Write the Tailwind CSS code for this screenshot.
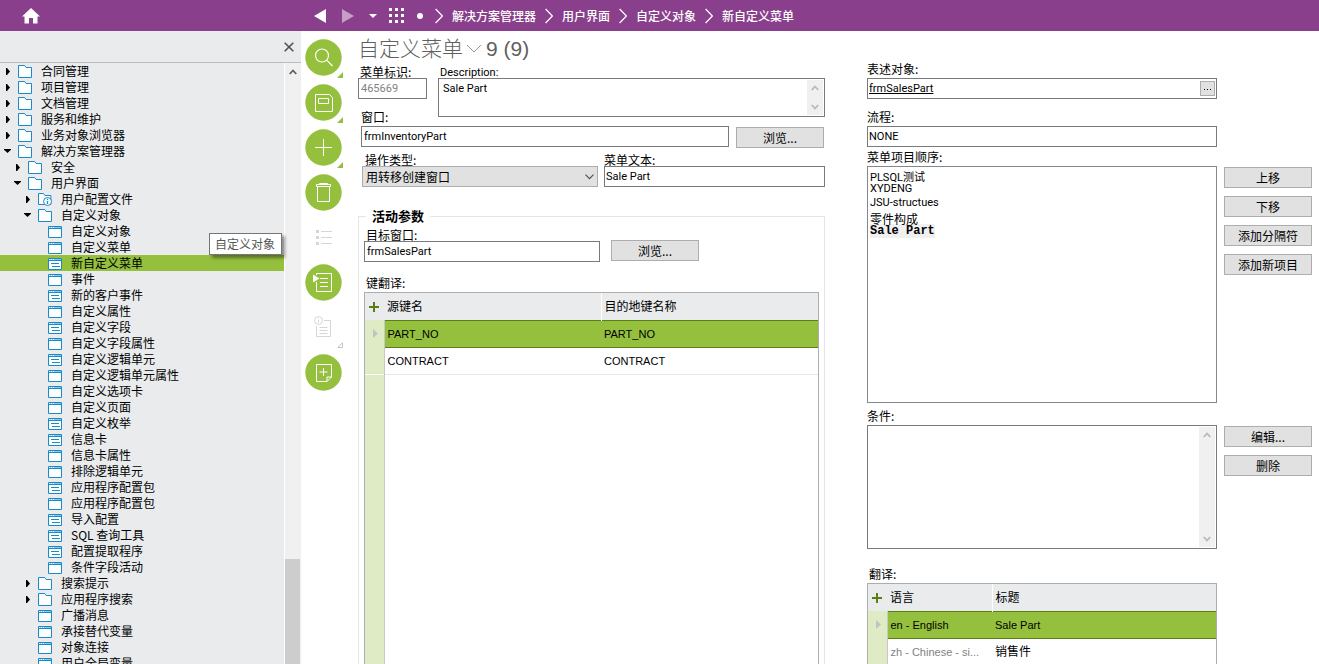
<!DOCTYPE html>
<html lang="zh-CN">
<head>
<meta charset="utf-8">
<title>自定义菜单</title>
<script src="https://cdn.jsdelivr.net/npm/@tailwindcss/browser@4"></script>
</head>
<body class="h-screen overflow-hidden flex flex-col bg-white text-black text-xs font-['Noto_Sans_CJK_SC',sans-serif]">
<svg class="hidden">
  <symbol id="folder" viewBox="0 0 14 13"><path d="M.5 12.5V.5h6.2l1.4 2h5.4v10z" fill="#fff" stroke="#1a8bc9"/></symbol>
  <symbol id="folderinfo" viewBox="0 0 14 13"><path d="M.5 11.5V.5h5l1.400 2h6v9z" fill="#fff" stroke="#1a8bc9"/><circle cx="9.500" cy="8.500" r="4" fill="#fff" stroke="#1a8bc9"/><path d="M9.500 5.800v1.200M9.500 8v3" stroke="#1a8bc9" stroke-width="1.200"/></symbol>
  <symbol id="win" viewBox="0 0 14 13"><path d="M.5 1.500h13v11H.5z" fill="#fff" stroke="#1a8bc9"/><path d="M2 2.500h1M4 2.500h1M6 2.500h7" stroke="#8cc4e4"/><path d="M1 3.500h12" stroke="#1a8bc9"/></symbol>
  <symbol id="form" viewBox="0 0 14 13"><path d="M.5 1.500h13v11H.5z" fill="#fff" stroke="#1a8bc9"/><path d="M2 2.500h1M4 2.500h1M6 2.500h7" stroke="#8cc4e4"/><path d="M1 3.500h12M3 6.500h8M4 9.500h8" stroke="#1a8bc9"/></symbol>
  <symbol id="closed" viewBox="0 0 4 7"><path d="M0 0h1l3 3.500L1 7H0z"/></symbol>
  <symbol id="open" viewBox="0 0 7 4"><path d="M0 0h7v.8L3.500 4 0 .8z"/></symbol>
  <symbol id="crumb" viewBox="0 0 8 16"><path d="M.6 1l6.800 7-6.800 7" fill="none" stroke="#fff" stroke-width="1.200"/></symbol>
  <symbol id="up" viewBox="0 0 8 6"><path d="M.7 5L4 1.500 7.300 5" fill="none" stroke="currentColor" stroke-width="1.800"/></symbol>
  <symbol id="down" viewBox="0 0 8 6"><path d="M.7 1L4 4.500 7.300 1" fill="none" stroke="currentColor" stroke-width="1.800"/></symbol>
  <symbol id="corner" viewBox="0 0 6 6"><path d="M6 0v6H0z" fill="#94c03d"/></symbol>
  <symbol id="plus" viewBox="0 0 10 10"><path d="M5 0v10M0 5h10" stroke="#5a7f14" stroke-width="2"/></symbol>
  <symbol id="rowmark" viewBox="0 0 5 9"><path d="M0 0l5 4.500L0 9z" fill="#bfc3c6"/></symbol>
</svg>

<header class="h-[31px] shrink-0 flex items-center bg-[#893f8b] text-white">
  <button aria-label="主页" class="ml-[22px] w-[18px]"><svg class="w-[18px] h-4" viewBox="0 0 18 16"><path d="M9 0l9 8.500h-2.500V15.500H11V10H7v5.500H2.500V8.500H0z" fill="#fff"/></svg></button>
  <button aria-label="后退" class="ml-[274px]"><svg class="w-3 h-3.5" viewBox="0 0 12 14"><path d="M12 0v14L0 7z" fill="#fff"/></svg></button>
  <button aria-label="前进" class="ml-4"><svg class="w-3 h-3.5" viewBox="0 0 12 14"><path d="M0 0v14l12-7z" fill="#c59fc6"/></svg></button>
  <button aria-label="历史记录" class="ml-[15px]"><svg class="w-2 h-1" viewBox="0 0 8 4"><path d="M0 0h8L4 4z" fill="#fff"/></svg></button>
  <button aria-label="应用" class="ml-3"><svg class="w-[15px] h-[15px]" viewBox="0 0 15 15"><path d="M0 1.500h15M0 7.500h15M0 13.500h15" stroke="#fff" stroke-width="3" stroke-dasharray="3 3"/></svg></button>
  <span class="ml-[13px] size-1.5 rounded-full bg-white"></span>
  <nav aria-label="路径" class="ml-3 flex items-center gap-[9px] font-medium whitespace-nowrap">
    <svg class="w-2 h-4"><use href="#crumb"/></svg><a href="#">解决方案管理器</a>
    <svg class="w-2 h-4"><use href="#crumb"/></svg><a href="#">用户界面</a>
    <svg class="w-2 h-4"><use href="#crumb"/></svg><a href="#">自定义对象</a>
    <svg class="w-2 h-4"><use href="#crumb"/></svg><a href="#">新自定义菜单</a>
  </nav>
</header>

<div class="flex flex-1 min-h-0">
  <aside class="relative w-[301px] shrink-0 flex flex-col bg-[#e9ebed]">
    <div class="h-8 shrink-0 border-b border-[#b9bbbd] flex items-center justify-end pr-[7px]">
      <button aria-label="关闭"><svg class="w-2.5 h-2.5" viewBox="0 0 10 10"><path d="M.7.7l8.600 8.600M9.300.7L.7 9.300" stroke="#505050" stroke-width="1.600"/></svg></button>
    </div>
    <div class="flex flex-1 min-h-0">
      <ul id="tree" class="flex-1 overflow-hidden"></ul>
      <div class="w-[17px] border-l border-white bg-[#f0f0f0] pr-px flex flex-col items-center">
        <svg class="w-2 h-1.5 mt-1.5 text-[#606060]"><use href="#up"/></svg>
        <div class="mt-[484px] w-[15px] flex-1 bg-[#cdcdcd]"></div>
      </div>
    </div>
    <div role="tooltip" class="absolute left-[209px] top-[202px] w-[73px] h-[22px] pl-[5px] border border-[#767676] bg-white text-[#575757] leading-5 whitespace-nowrap shadow-[3px_3px_3px_#00000066]">自定义对象</div>
  </aside>

  <div class="w-[57px] shrink-0 pt-2 pl-1 flex flex-col gap-2">
    <button aria-label="搜索" class="flex items-end"><svg class="size-[37px]" viewBox="0 0 37 37"><circle cx="18.500" cy="18.500" r="18.200" fill="#94c03d"/><g fill="none" stroke="#fff" stroke-width="1.200"><circle cx="17" cy="16.500" r="6.500"/><path d="M21.700 21.200l5.800 5.800"/></g></svg><svg class="size-1.5 -ml-[5px] -mb-0.5"><use href="#corner"/></svg></button>
    <button aria-label="保存" class="flex items-end"><svg class="size-[37px]" viewBox="0 0 37 37"><circle cx="18.500" cy="18.500" r="18.200" fill="#94c03d"/><g fill="none" stroke="#fff"><path d="M10.500 10.500h14l3 3v14h-17zM13.500 14.500h10v5h-10z"/></g></svg><svg class="size-1.5 -ml-[5px] -mb-0.5"><use href="#corner"/></svg></button>
    <button aria-label="新建" class="flex items-end"><svg class="size-[37px]" viewBox="0 0 37 37"><circle cx="18.500" cy="18.500" r="18.200" fill="#94c03d"/><path d="M18.500 10v17M10 18.500h17" stroke="#fff"/></svg><svg class="size-1.5 -ml-[5px] -mb-0.5"><use href="#corner"/></svg></button>
    <button aria-label="删除记录"><svg class="size-[37px]" viewBox="0 0 37 37"><circle cx="18.500" cy="18.500" r="18.200" fill="#94c03d"/><path d="M12.500 13v14.500h12V13M11.500 12.500v-2h14v2zM14.500 10V9.500h8v.5" fill="none" stroke="#fff"/></svg></button>
    <button aria-label="列表"><svg class="size-[37px]" viewBox="0 0 37 37"><path d="M11 12.500h3M11 18.500h3M11 24.500h3" stroke="#d6d6d6" stroke-width="3"/><path d="M16 12.500h11M16 18.500h11M16 24.500h11" stroke="#d6d6d6"/></svg></button>
    <button aria-label="运行"><svg class="size-[37px]" viewBox="0 0 37 37"><circle cx="18.500" cy="18.500" r="18.200" fill="#94c03d"/><path d="M11.500 11V9.500h15v18h-15V18M15 14.500h8M15 18.500h8M15 22.500h8" fill="none" stroke="#fff"/><path d="M8 10.500l6.500 4-6.500 4z" fill="#fff"/></svg></button>
    <button aria-label="信息" class="flex items-end"><svg class="size-[37px]" viewBox="0 0 37 37"><g fill="none" stroke="#d6d6d6"><circle cx="13.500" cy="11.500" r="4"/><path d="M13.500 9v1M13.500 11v3M19 11.500h6.500v16h-14V17M14.500 18.500h8M14.500 21.500h8M14.500 24.500h8"/></g></svg><svg class="size-1.5 -ml-[5px] -mb-0.5" viewBox="0 0 6 6"><path d="M5.500 .8v4.700H.8z" fill="none" stroke="#c4c4c4"/></svg></button>
    <button aria-label="便笺"><svg class="size-[37px]" viewBox="0 0 37 37"><circle cx="18.500" cy="18.500" r="18.200" fill="#94c03d"/><path d="M22 27.500H11.500v-17h15V23L22 27.500V23h4.500M18.500 14v8M14.500 18h8" fill="none" stroke="#fff"/></svg></button>
  </div>

  <main class="flex-1 min-w-0 flex pr-[7px]">
    <section class="flex-[467] min-w-0 flex flex-col">
      <h1 class="h-[35px] shrink-0 flex items-center text-[21px] text-[#5f5f5f] font-['Liberation_Sans','Noto_Sans_CJK_SC',sans-serif] font-light whitespace-nowrap">自定义菜单<svg class="w-4 h-[9px] ml-[3px] mr-1" viewBox="0 0 16 9"><path d="M1 1l7 7 7-7" fill="none" stroke="#999"/></svg><span>9 (9)</span></h1>
      <div class="flex gap-[11px]">
        <div class="w-[69px]">
          <label for="id" class="block h-3 leading-3 pl-0.5">菜单标识:</label>
          <input id="id" value="465669" class="block w-full h-[21px] border border-[#7a7a7a] px-0.5 text-[11px] font-[Roboto,sans-serif] text-[#828282]">
        </div>
        <div class="flex-1">
          <label for="desc" class="block h-3 leading-[14px] pl-0.5 text-[11px] font-[Roboto,sans-serif]">Description:</label>
          <div class="h-[39px] flex border border-[#7a7a7a] p-px pl-1">
            <textarea id="desc" class="flex-1 resize-none outline-none pt-px text-[11px] font-[Roboto,sans-serif] leading-4">Sale Part</textarea>
            <div class="w-4 bg-[#f0f0f0] text-[#b8b8b8] flex flex-col items-center justify-between py-[5px]"><svg class="w-2 h-1.5"><use href="#up"/></svg><svg class="w-2 h-1.5"><use href="#down"/></svg></div>
          </div>
        </div>
      </div>
      <div class="-mt-1.5 pl-[3px]">
        <label for="win-name" class="block w-20 h-[15px] leading-3">窗口:</label>
        <div class="flex gap-[7px] pr-px">
          <input id="win-name" value="frmInventoryPart" class="flex-1 min-w-0 h-[21px] border border-[#7a7a7a] px-0.5 text-[11px] font-[Roboto,sans-serif]">
          <button class="mt-px w-[88px] h-[21px] border border-[#adadad] bg-[#e1e1e1] leading-none">浏览...</button>
        </div>
      </div>
      <div class="mt-1.5 pl-1 flex gap-1.5">
        <div class="flex-[236]">
          <label for="op" class="block h-3 leading-3 pl-[3px]">操作类型:</label>
          <div class="relative">
            <select id="op" class="appearance-none block w-full h-[21px] border border-[#adadad] bg-[#e1e1e1] px-[3px]"><option>用转移创建窗口</option></select>
            <svg class="absolute right-1 top-2 w-[9px] h-1.5 pointer-events-none" viewBox="0 0 9 6"><path d="M.5.7l4 4 4-4" fill="none" stroke="#505050" stroke-width="1.200"/></svg>
          </div>
        </div>
        <div class="flex-[221]">
          <label for="text" class="block h-3 leading-3">菜单文本:</label>
          <input id="text" value="Sale Part" class="block w-full h-[21px] border border-[#7a7a7a] px-px text-[11px] font-[Roboto,sans-serif]">
        </div>
      </div>
      <fieldset class="mt-[21px] flex-1 min-h-0 min-w-0 border border-b-0 border-[#e5e5e5] pl-[5px] pr-[5px]">
        <legend class="ml-[2px] px-1.5 h-4 leading-4 text-[13px] font-bold">活动参数</legend>
        <div class="h-[440px] flex flex-col pt-[5px]">
          <label for="target" class="block h-3 leading-3 pl-0.5">目标窗口:</label>
          <div class="flex gap-[11px]">
            <input id="target" value="frmSalesPart" class="w-[236px] h-[21px] border border-[#7a7a7a] px-0.5 text-[11px] font-[Roboto,sans-serif]">
            <button class="-mt-px w-[88px] h-[21px] border border-[#adadad] bg-[#e1e1e1] leading-none">浏览...</button>
          </div>
          <div class="mt-[15px] h-[15px] leading-3 pl-0.5">键翻译:</div>
          <div class="flex-1 flex flex-col border border-b-0 border-[#adadad]">
            <table class="w-full table-fixed border-collapse">
              <thead><tr class="h-[27px] bg-[#e9ebed] text-left">
                <th class="w-[19px] p-0"><button aria-label="添加" class="block ml-1"><svg class="size-2.5"><use href="#plus"/></svg></button></th>
                <th class="p-0 pl-[3px] font-normal">源键名</th><th class="p-0 pl-[3px] font-normal border-l border-white">目的地键名称</th></tr></thead>
              <tbody class="text-[11px] font-['Liberation_Sans',sans-serif]">
                <tr class="h-[27px] bg-[#94c03d]"><td class="p-0 bg-[#dfebc5] border-r border-[#c8c8c8]"><svg class="ml-2 w-[5px] h-[9px]"><use href="#rowmark"/></svg></td><td class="p-0 pt-0.5 pl-[3px] border-y border-[#5a7f14]">PART_NO</td><td class="p-0 pt-0.5 pl-[3px] border-y border-[#5a7f14]">PART_NO</td></tr>
                <tr class="h-[27px]"><td class="p-0 bg-[#dfebc5] border-r border-[#c8c8c8]"></td><td class="p-0 pt-0.5 pl-[3px] border-b border-[#e6e6e6]">CONTRACT</td><td class="p-0 pt-0.5 pl-[3px] border-b border-[#e6e6e6]">CONTRACT</td></tr>
              </tbody>
            </table>
            <div class="flex-1 w-5 bg-[#dfebc5] border-r border-[#c8c8c8]"></div>
          </div>
        </div>
      </fieldset>
    </section>

    <section class="ml-[42px] flex-[445] min-w-0 pt-8 grid grid-cols-[1fr_88px] gap-x-[7px] content-start">
      <div>
        <label for="obj" class="block h-[15px] leading-3">表述对象:</label>
        <div class="h-[21px] flex border border-[#7a7a7a] p-px">
          <input id="obj" value="frmSalesPart" class="flex-1 min-w-0 outline-none h-4 underline underline-offset-1 text-[11px] font-[Roboto,sans-serif]">
          <button aria-label="选择对象" class="w-[15px] h-[15px] mt-px border border-[#adadad] bg-[#e1e1e1] flex items-center justify-center gap-px pt-0.5"><span class="size-px bg-black"></span><span class="size-px bg-black mx-px"></span><span class="size-px bg-black"></span></button>
        </div>
        <label for="flow" class="mt-3 block h-[15px] leading-3">流程:</label>
        <input id="flow" value="NONE" class="block w-full h-[21px] border border-[#7a7a7a] px-px text-[11px] font-[Roboto,sans-serif]">
      </div>
      <div></div>

      <div class="mt-1">
        <label for="order" class="block h-[15px] leading-3">菜单项目顺序:</label>
        <select id="order" size="5" class="block w-full h-[237px] border border-[#828790] px-0.5 py-px overflow-hidden text-[11px] font-[Roboto,'Noto_Sans_CJK_SC',sans-serif]">
          <option class="h-3.5 min-h-0 p-0 leading-3">PLSQL测试</option>
          <option class="h-3.5 min-h-0 p-0 leading-4">XYDENG</option>
          <option class="h-3.5 min-h-0 p-0 leading-4">JSU-structues</option>
          <option class="h-3.5 min-h-0 p-0 text-xs leading-3">零件构成</option>
          <option class="h-3.5 min-h-0 p-0 w-fit text-xs leading-4 font-bold bg-[#f0f0f0] font-['Liberation_Mono',monospace]">Sale Part</option>
        </select>
      </div>
      <div class="mt-1 pt-4 flex flex-col gap-2">
        <button class="h-[21px] border border-[#adadad] bg-[#e1e1e1] leading-none">上移</button>
        <button class="h-[21px] border border-[#adadad] bg-[#e1e1e1] leading-none">下移</button>
        <button class="h-[21px] border border-[#adadad] bg-[#e1e1e1] leading-none">添加分隔符</button>
        <button class="h-[21px] border border-[#adadad] bg-[#e1e1e1] leading-none">添加新项目</button>
      </div>

      <div class="mt-[7px]">
        <label for="cond" class="block h-[15px] leading-3">条件:</label>
        <div class="h-[124px] flex border border-[#7a7a7a] p-px">
          <textarea id="cond" class="flex-1 resize-none outline-none text-[11px]"></textarea>
          <div class="w-4 bg-[#f0f0f0] text-[#b8b8b8] flex flex-col items-center justify-between py-[5px]"><svg class="w-2 h-1.5"><use href="#up"/></svg><svg class="w-2 h-1.5"><use href="#down"/></svg></div>
        </div>
      </div>
      <div class="mt-[7px] pt-4 flex flex-col gap-2">
        <button class="h-[21px] border border-[#adadad] bg-[#e1e1e1] leading-none">编辑...</button>
        <button class="h-[21px] border border-[#adadad] bg-[#e1e1e1] leading-none">删除</button>
      </div>

      <div class="mt-[19px]">
        <div class="h-[15px] leading-3 pl-0.5">翻译:</div>
        <div class="border border-b-0 border-[#adadad]">
          <table class="w-full table-fixed border-collapse">
            <thead><tr class="h-[27px] bg-[#e9ebed] text-left">
              <th class="w-[19px] p-0"><button aria-label="添加翻译" class="block ml-1"><svg class="size-2.5"><use href="#plus"/></svg></button></th>
              <th class="w-[105px] p-0 pl-[3px] font-normal">语言</th><th class="p-0 pl-[3px] font-normal border-l border-white">标题</th></tr></thead>
            <tbody class="text-[11px] font-['Liberation_Sans','Noto_Sans_CJK_SC',sans-serif]">
              <tr class="h-[27px] bg-[#94c03d]"><td class="p-0 bg-[#dfebc5] border-r border-[#c8c8c8]"><svg class="ml-2 w-[5px] h-[9px]"><use href="#rowmark"/></svg></td><td class="p-0 pt-0.5 pl-[3px] border-y border-[#5a7f14]">en - English</td><td class="p-0 pt-0.5 pl-[3px] border-y border-[#5a7f14]">Sale Part</td></tr>
              <tr class="h-[27px]"><td class="p-0 bg-[#dfebc5] border-r border-[#c8c8c8]"></td><td class="p-0 pt-0.5 pl-[3px] border-b border-[#e6e6e6] text-[#828282] whitespace-nowrap">zh - Chinese - si...</td><td class="p-0 pl-[3px] border-b border-[#e6e6e6] text-xs">销售件</td></tr>
            </tbody>
          </table>
        </div>
      </div>
      <div></div>
    </section>
  </main>
</div>

<script>
// depth, icon, label, arrow state
const nodes = [
  [0,'folder','合同管理','closed'],[0,'folder','项目管理','closed'],[0,'folder','文档管理','closed'],
  [0,'folder','服务和维护','closed'],[0,'folder','业务对象浏览器','closed'],[0,'folder','解决方案管理器','open'],
  [1,'folder','安全','closed'],[1,'folder','用户界面','open'],[2,'folderinfo','用户配置文件','closed'],[2,'folder','自定义对象','open'],
  [3,'win','自定义对象'],[3,'win','自定义菜单'],[3,'form','新自定义菜单'],[3,'win','事件'],[3,'form','新的客户事件'],
  [3,'win','自定义属性'],[3,'form','自定义字段'],[3,'win','自定义字段属性'],[3,'form','自定义逻辑单元'],[3,'win','自定义逻辑单元属性'],
  [3,'win','自定义选项卡'],[3,'win','自定义页面'],[3,'form','自定义枚举'],[3,'form','信息卡'],[3,'win','信息卡属性'],[3,'win','排除逻辑单元'],
  [3,'form','应用程序配置包'],[3,'win','应用程序配置包'],[3,'form','导入配置'],[3,'form','SQL 查询工具'],[3,'form','配置提取程序'],[3,'win','条件字段活动'],
  [2,'folder','搜索提示','closed'],[2,'folder','应用程序搜索','closed'],[2,'win','广播消息'],[2,'win','承接替代变量'],[2,'win','对象连接'],[2,'win','用户全局变量']
];
const arrows = {
  closed: '<svg class="w-1 h-[7px] ml-0.5"><use href="#closed"/></svg>',
  open: '<svg class="w-[7px] h-1"><use href="#open"/></svg>'
};
document.getElementById('tree').innerHTML = nodes.map(([depth, icon, label, arrow]) =>
  `<li class="h-4 leading-4 flex items-center whitespace-nowrap ${label === '新自定义菜单' ? 'bg-[#94c03d]' : ''}" style="padding-left:${4 + depth * 10}px">
    <span class="w-3.5 shrink-0">${arrows[arrow] || ''}</span>
    <svg class="w-3.5 h-[13px] mt-px shrink-0"><use href="#${icon}"/></svg><span class="ml-[9px]">${label}</span></li>`).join('');
</script>
</body>
</html>
